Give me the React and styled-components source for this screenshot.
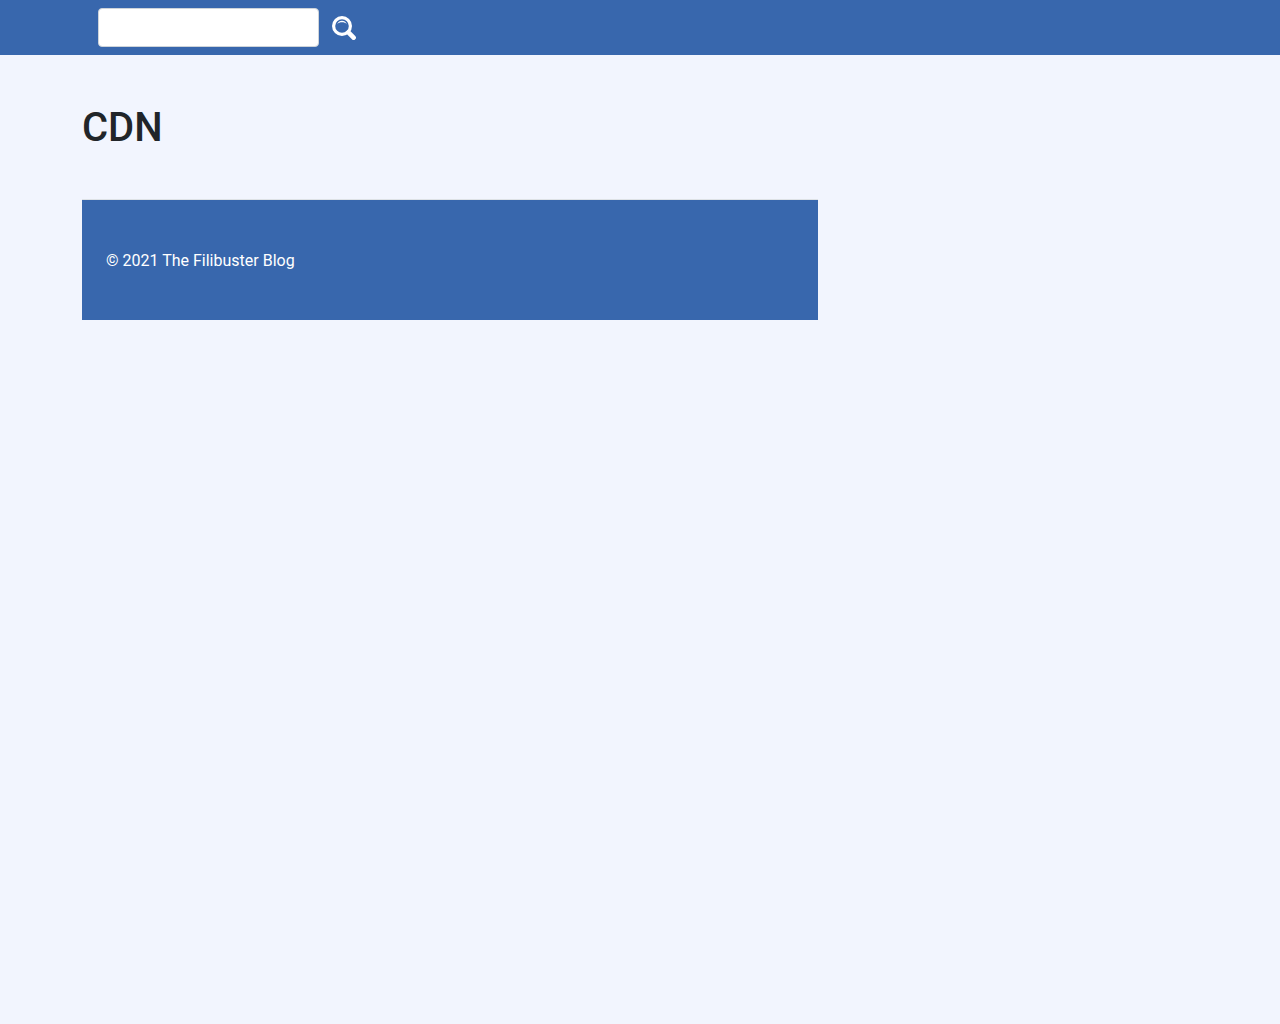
import { useState } from "react";
import styled, { createGlobalStyle } from "styled-components";

const GlobalStyle = createGlobalStyle`
	*, *::before, *::after {
		box-sizing: border-box;
	}
	body {
		margin: 0;
		background-color: #f2f5fe;
		color: #212529;
		font-family: Roboto, sans-serif;
		font-size: 16px;
		line-height: 24px;
	}
`;

const Container = styled.div`
	width: 100%;
	max-width: 1140px;
	margin: 0 auto;
	padding: 0 12px;
`;

const Navbar = styled.nav`
	padding: 8px 0;
	background-color: #3867ad;
`;

const SearchForm = styled.form`
	display: flex;
	align-items: center;
	padding: 0 16px;
`;

const SearchInput = styled.input`
	width: 221px;
	height: 39px;
	padding: 6px 12px;
	border: 1px solid #ced4da;
	border-radius: 4px;
	background-color: white;
	color: #212529;
	font: inherit;
`;

const SearchButton = styled.button`
	display: flex;
	margin-left: 13px;
	padding: 0;
	border: none;
	background: none;
	color: white;
	cursor: pointer;
`;

const Main = styled.main`
	padding: 49px 0 47px;
`;

const Title = styled.h1`
	margin: 0;
	font-size: 40px;
	font-weight: 500;
	line-height: 48px;
`;

const Footer = styled.footer`
	width: 66%;
	max-width: 736px;
	padding: 49px 24px 47px;
	border-top: 1px solid #dee2e6;
	background-color: #3867ad;
	color: white;
`;

const SearchIcon = () => (
	<svg width="24" height="24" viewBox="0 0 24 24" fill="none" stroke="currentColor" aria-hidden="true">
		<circle cx="10" cy="10" r="8.4" strokeWidth="3.2" />
		<path d="M16.4 16.4L21.6 21.7" strokeWidth="4.6" strokeLinecap="round" />
		<path d="M5 8.2C7.2 3.7 12.8 3.7 15 8.2C12.4 5.7 7.6 5.7 5 8.2Z" fill="currentColor" stroke="none" />
	</svg>
);

const App = () => {
	const [query, setQuery] = useState("");

	return (
		<>
			<GlobalStyle />
			<Navbar>
				<Container>
					<SearchForm role="search" onSubmit={(e) => e.preventDefault()}>
						<SearchInput
							type="search"
							aria-label="Search"
							value={query}
							onChange={(e) => setQuery(e.target.value)}
						/>
						<SearchButton type="submit" aria-label="Submit search">
							<SearchIcon />
						</SearchButton>
					</SearchForm>
				</Container>
			</Navbar>
			<Container>
				<Main>
					<Title>CDN</Title>
				</Main>
				<Footer>© 2021 The Filibuster Blog</Footer>
			</Container>
		</>
	);
};

export default App;
